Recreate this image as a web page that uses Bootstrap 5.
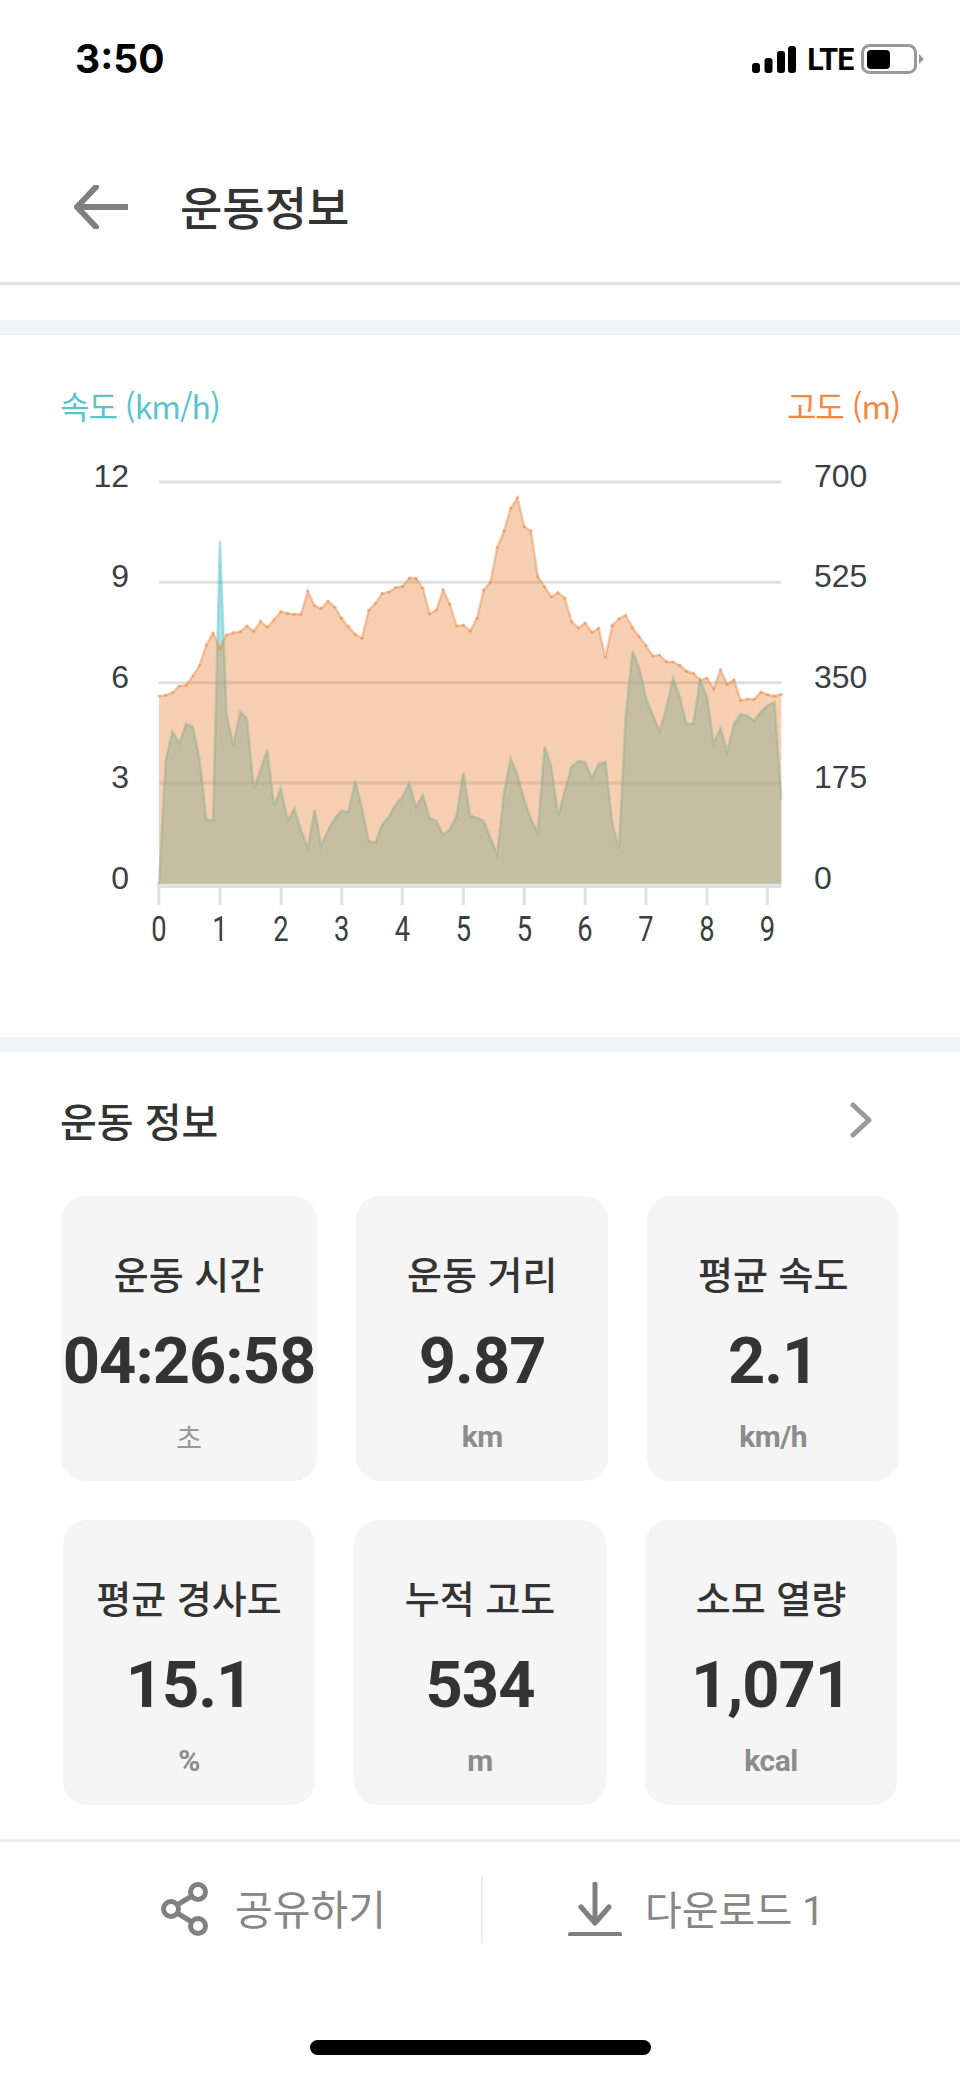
<!DOCTYPE html>
<html lang="ko">
<head>
    <meta charset="UTF-8" />
    <title>운동정보</title>
    <link href="https://cdn.jsdelivr.net/npm/bootstrap@5.3.0/dist/css/bootstrap.min.css" rel="stylesheet" />
    <style>
        body {
            font-family: "Noto Sans CJK KR", "Roboto", sans-serif;
            background: #fff;
            color: #333;
            overflow-x: hidden;
        }
        .status-bar { height: 118px; padding: 0 36px 0 75px; }
        .status-time { font-family: "Inter", sans-serif; font-weight: 700; font-size: 39px; color: #000; }
        .status-lte { display: inline-block; font-family: "Roboto", sans-serif; font-weight: 700; font-size: 32px; color: #000; margin: 0 6px 0 10px; line-height: 1; letter-spacing: -1px; transform: scaleX(.95); }
        .top-bar { height: 167px; padding: 14px 0 0 74px; border-bottom: 3px solid #e2e2e2; }
        .top-title { font-size: 46px; font-weight: 500; margin: 0 0 2px 52px; line-height: 1.2; }
        .gray-band { height: 15px; background: #f1f3f5; }
        .chart-legend { height: 44px; margin-top: 50px; padding: 0 60px; font-size: 32px; font-weight: 400; line-height: 40px; letter-spacing: -1px; }
        .legend-speed { color: #58c4cc; }
        .legend-alt { color: #f5873f; }
        .chart-svg { display: block; width: 960px; height: 608px; }
        .axis-y { font-family: "Liberation Sans", sans-serif; font-size: 32px; fill: #3a3f42; }
        .axis-x { font-family: "Roboto", sans-serif; font-size: 35px; fill: #3a3f42; }
        .info-head { height: 50px; margin: 43px 0 51px; padding: 0 88px 0 60px; }
        .info-title { font-size: 40px; font-weight: 500; margin: 0; line-height: 48px; }
        .stat-grid { gap: 39px; }
        .stat-row { gap: 39px; }
        .stat-box {
            min-width: 252px;
            height: 285px;
            padding: 52px 2px 0;
            background: #f5f5f5;
            border-radius: 24px;
            text-align: center;
        }
        .stat-name { font-size: 38px; font-weight: 500; line-height: 50px; }
        .stat-value { font-family: "Roboto", sans-serif; font-weight: 700; font-size: 65px; letter-spacing: -1px; line-height: 80px; margin-top: 23px; white-space: nowrap; }
        .stat-unit { font-family: "Roboto", sans-serif; font-weight: 700; font-size: 30px; letter-spacing: -.5px; line-height: 40px; margin-top: 16px; color: #8c8c8c; }
        .stat-unit-ko { font-family: "Noto Sans CJK KR", sans-serif; font-size: 28px; font-weight: 400; color: #999; }
        .bottom-rule { height: 3px; margin-top: 34px; background: #efefef; }
        .action-row { height: 68px; margin-top: 33px; }
        .action-item { font-family: "Roboto", "Noto Sans CJK KR", sans-serif; font-weight: 400; color: #868686; line-height: 1; }
        .action-item span { padding-top: 5px; }
        .action-share { flex: 0 0 481px; padding-right: 95px; font-size: 41px; gap: 26px; }
        .action-down { flex: 1 1 0; padding-left: 85px; border-left: 2px solid #eee; font-size: 40px; gap: 23px; }
        .home-bar { width: 341px; height: 15px; margin: 97px auto 0; border-radius: 8px; background: #000; }
    </style>
</head>
<body>

<div class="status-bar d-flex align-items-center justify-content-between">
    <div class="status-time">3:50</div>
    <div class="d-flex align-items-center">
        <svg width="44" height="27" viewBox="0 0 44 27">
            <rect x="0" y="17" width="8" height="10" rx="3" fill="#000" />
            <rect x="12.5" y="12" width="8" height="15" rx="3" fill="#000" />
            <rect x="25" y="5" width="8" height="22" rx="3" fill="#000" />
            <rect x="36" y="0" width="8" height="27" rx="3" fill="#000" />
        </svg>
        <span class="status-lte">LTE</span>
        <svg width="63" height="30" viewBox="0 0 63 30">
            <rect x="1.5" y="1.5" width="53" height="27" rx="7" fill="none" stroke="#999" stroke-width="3" />
            <rect x="6" y="6" width="23" height="19" rx="4" fill="#000" />
            <path d="M58 10l5 5-5 5z" fill="#999" />
        </svg>
    </div>
</div>

<div class="top-bar d-flex align-items-center">
    <svg width="54" height="44" viewBox="0 0 54 44">
        <path d="M53 22H3M22 2 3 22l19 20" fill="none" stroke="#808080" stroke-width="6" stroke-linecap="round" stroke-linejoin="round" />
    </svg>
    <h1 class="top-title">운동정보</h1>
</div>

<div class="gray-band" style="margin-top: 35px"></div>

<div class="chart-legend d-flex justify-content-between">
    <span class="legend-speed">속도 (km/h)</span>
    <span class="legend-alt">고도 (m)</span>
</div>
<svg class="chart-svg" id="chart" viewBox="0 429 960 608"></svg>

<div class="gray-band"></div>

<div class="info-head d-flex align-items-center justify-content-between">
    <h2 class="info-title">운동 정보</h2>
    <svg width="22" height="36" viewBox="0 0 22 36">
        <path d="M3 3l16 15L3 33" fill="none" stroke="#999" stroke-width="5" stroke-linecap="round" stroke-linejoin="round" />
    </svg>
</div>

<div class="stat-grid d-flex flex-column">
    <div class="stat-row d-flex justify-content-center">
        <div class="stat-box">
            <div class="stat-name">운동 시간</div>
            <div class="stat-value">04:26:58</div>
            <div class="stat-unit stat-unit-ko">초</div>
        </div>
        <div class="stat-box">
            <div class="stat-name">운동 거리</div>
            <div class="stat-value">9.87</div>
            <div class="stat-unit">km</div>
        </div>
        <div class="stat-box">
            <div class="stat-name">평균 속도</div>
            <div class="stat-value">2.1</div>
            <div class="stat-unit">km/h</div>
        </div>
    </div>
    <div class="stat-row d-flex justify-content-center">
        <div class="stat-box">
            <div class="stat-name">평균 경사도</div>
            <div class="stat-value">15.1</div>
            <div class="stat-unit">%</div>
        </div>
        <div class="stat-box">
            <div class="stat-name">누적 고도</div>
            <div class="stat-value">534</div>
            <div class="stat-unit">m</div>
        </div>
        <div class="stat-box">
            <div class="stat-name">소모 열량</div>
            <div class="stat-value">1,071</div>
            <div class="stat-unit">kcal</div>
        </div>
    </div>
</div>

<div class="bottom-rule"></div>

<div class="action-row d-flex">
    <div class="action-item action-share d-flex align-items-center justify-content-end">
        <svg width="48" height="54" viewBox="0 0 48 54">
            <g fill="none" stroke="#808080" stroke-width="5">
                <circle cx="10" cy="27" r="7.5" />
                <circle cx="37" cy="10" r="7.5" />
                <circle cx="37" cy="44" r="7.5" />
                <path d="M16 23 31 14M16 31l15 9" />
            </g>
        </svg>
        <span>공유하기</span>
    </div>
    <div class="action-item action-down d-flex align-items-center justify-content-start">
        <svg width="54" height="54" viewBox="0 0 54 54">
            <path d="M27 2V41M13 25l14 16 14-16" fill="none" stroke="#808080" stroke-width="5" stroke-linecap="round" stroke-linejoin="round" />
            <rect x="0" y="50" width="54" height="4.5" rx="2" fill="#808080" />
        </svg>
        <span>다운로드 1</span>
    </div>
</div>

<div class="home-bar"></div>

<script src="https://cdn.jsdelivr.net/npm/bootstrap@5.3.0/dist/js/bootstrap.bundle.min.js"></script>
<script>
    // y pixels of each sample, one sample per 1/9 of an x step
    const altitude = [
        696, 695.3, 692.7, 686, 685.3, 676, 665.3, 645, 633.3, 648.3, 635, 632.7, 631.7, 626, 631.3, 621.3, 627,
        620, 611.7, 613.3, 614.3, 614.3, 591, 605.7, 608.3, 601.3, 607.3, 618.3, 626.7, 634.3, 638.3, 610.3, 603.3,
        593.3, 592, 587.7, 586.3, 578, 578.3, 588.3, 613.7, 610, 590, 604.3, 626, 625, 631, 618.3, 590, 582.3, 547.7,
        531, 508.3, 497.7, 526.7, 531, 576.7, 586.7, 596.7, 592.7, 598.3, 621.7, 628, 623, 632.3, 628.3, 657.3, 625.7,
        618.7, 615.3, 627.7, 636.7, 645.7, 656, 655, 661.7, 662, 665.3, 671.3, 673.3, 680, 678.3, 688.7, 670, 684.3,
        680, 700.3, 699, 699.3, 692, 694.7, 696, 694.3
    ];
    const speed = [
        884.3, 760, 731.7, 743.3, 724, 726.7, 760, 819.3, 820.3, 540.7, 715, 745.3, 711.7, 718.7, 789, 770, 750, 806,
        788.3, 820.7, 808.7, 830, 848.3, 810, 845.7, 830, 818.3, 810.7, 812.3, 780.7, 808.3, 841.3, 842.7, 824.3, 816.7,
        804.3, 796.7, 783.3, 807.3, 795, 818, 821, 834.7, 829.3, 815.7, 772.7, 815.7, 818, 820.7, 838.3, 854.3,
        793.3, 758.3, 775, 800, 819.3, 832.3, 746.7, 766.7, 815.7, 790.7, 766.7, 761.3, 762, 778.3, 764, 762, 822.7,
        848.7, 716.7, 651.3, 668.3, 698.3, 715, 731, 708.3, 678.3, 697.3, 724, 723.3, 680, 696.7, 743.3, 728.3, 751.7,
        724, 714, 716, 720.7, 711.7, 705.3, 702.3, 799.3
    ];

    const chartLeft = 159;
    const chartRight = 781.3;
    const chartBase = 883.5;
    const stepX = (chartRight - chartLeft) / (altitude.length - 1);

    function linePoints(values) {
        return values.map((v, i) => (chartLeft + i * stepX).toFixed(1) + ',' + v).join(' ');
    }

    function areaPoints(values) {
        return chartLeft + ',' + chartBase + ' ' + linePoints(values) + ' ' + chartRight + ',' + chartBase;
    }

    let svg = '';
    const gridY = [482, 582.3, 682.7, 783];
    gridY.forEach(y => {
        svg += `<line x1="${chartLeft}" x2="${chartRight}" y1="${y}" y2="${y}" stroke="#e0e0e0" stroke-width="3" />`;
    });
    svg += `<rect x="${chartLeft - 1.5}" y="883" width="${chartRight - chartLeft + 1.5}" height="5" fill="#e0e0e0" />`;

    const tickX = [159, 220, 281, 341.7, 402.3, 463.3, 524.3, 585, 646, 707, 767.3];
    const tickLabels = [0, 1, 2, 3, 4, 5, 5, 6, 7, 8, 9];
    tickX.forEach((x, i) => {
        svg += `<line x1="${x}" x2="${x}" y1="884" y2="905" stroke="#e0e0e0" stroke-width="3" />`;
        svg += `<text class="axis-x" text-anchor="middle" transform="translate(${x} 941) scale(.78 1)">${tickLabels[i]}</text>`;
    });

    [['12', '700', 487], ['9', '525', 587], ['6', '350', 688], ['3', '175', 788], ['0', '0', 889]].forEach(row => {
        svg += `<text class="axis-y" x="129" y="${row[2]}" text-anchor="end">${row[0]}</text>`;
        svg += `<text class="axis-y" x="814" y="${row[2]}">${row[1]}</text>`;
    });

    // speed goes under altitude, that gives the olive overlap
    svg += `<polygon points="${areaPoints(speed)}" fill="rgba(79,195,199,.46)" />`;
    svg += `<polyline points="${linePoints(speed)}" fill="none" stroke="rgba(79,195,199,.45)" stroke-width="2.5" />`;
    svg += `<polygon points="${areaPoints(altitude)}" fill="rgba(232,135,62,.4)" />`;
    svg += `<polyline points="${linePoints(altitude)}" fill="none" stroke="rgba(235,130,60,.4)" stroke-width="2.5" />`;
    altitude.forEach((v, i) => {
        svg += `<circle cx="${(chartLeft + i * stepX).toFixed(1)}" cy="${v}" r="1.6" fill="rgba(235,130,60,.45)" />`;
    });

    document.getElementById('chart').innerHTML = svg;
</script>

</body>
</html>
